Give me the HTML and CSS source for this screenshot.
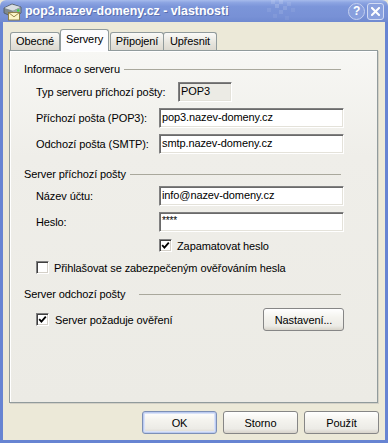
FILE: index.html
```html
<!DOCTYPE html>
<html lang="cs">
<head>
  <meta charset="UTF-8">
  <title>pop3.nazev-domeny.cz - vlastnosti</title>
  <link rel="stylesheet" href="styles.css">
</head>
<body>
  <div class="window">
    <!-- Titulek okna -->
    <div class="titlebar">
      <svg class="app-icon" width="19" height="19" viewBox="0 0 19 19">
        <polygon points="1,6 9,2 18,5 18,11 10,15 1,11" fill="#7f898e" stroke="#4d565b" stroke-width="0.8"/>
        <polygon points="1.5,6 9,2.5 17.5,5 10,8.8" fill="#d9dee1"/>
        <polygon points="10,9 17.5,5.3 17.5,10.8 10,14.5" fill="#9aa4a9"/>
        <circle cx="15.2" cy="8.4" r="1.2" fill="#35e03d"/>
        <rect x="5.5" y="10.5" width="11" height="7.5" fill="#fcf5c8" stroke="#8c7a3e" stroke-width="0.9"/>
        <polyline points="5.5,10.5 11,14.8 16.5,10.5" fill="none" stroke="#8c7a3e" stroke-width="0.9"/>
      </svg>
      <span class="title">pop3.nazev-domeny.cz - vlastnosti</span>
      <svg class="title-deco" width="34" height="22" viewBox="0 0 34 22">
        <rect x="4" y="0" width="4" height="4" fill="#fff" opacity="0.12"/>
        <rect x="12" y="0" width="4" height="4" fill="#fff" opacity="0.14"/>
        <rect x="20" y="2" width="4" height="4" fill="#fff" opacity="0.1"/>
        <rect x="8" y="4" width="4" height="4" fill="#fff" opacity="0.16"/>
        <rect x="16" y="6" width="4" height="4" fill="#fff" opacity="0.12"/>
        <rect x="0" y="8" width="4" height="4" fill="#fff" opacity="0.08"/>
        <rect x="12" y="10" width="4" height="4" fill="#fff" opacity="0.1"/>
        <rect x="24" y="8" width="4" height="4" fill="#fff" opacity="0.07"/>
        <rect x="6" y="14" width="4" height="4" fill="#fff" opacity="0.07"/>
        <rect x="18" y="16" width="4" height="4" fill="#fff" opacity="0.06"/>
      </svg>
      <div class="caption-buttons">
        <span class="cap-help">?</span>
        <span class="cap-close">
          <svg width="9" height="9" viewBox="0 0 9 9">
            <path d="M1 1 L8 8 M8 1 L1 8" stroke="#fff" stroke-width="2" stroke-linecap="square"/>
          </svg>
        </span>
      </div>
    </div>

    <div class="dialog-body">
      <!-- Záložky -->
      <div class="tabs">
        <span class="tab tab-general">Obecné</span>
        <span class="tab tab-servers active">Servery</span>
        <span class="tab tab-connection">Připojení</span>
        <span class="tab tab-advanced">Upřesnit</span>
      </div>

      <div class="tab-panel">
        <div class="group-title"><span class="gt-text gt-info">Informace o serveru</span></div>
        <div class="row">
          <span class="label">Typ serveru příchozí pošty:</span>
          <span class="field readonly">POP3</span>
        </div>
        <div class="row">
          <span class="label">Příchozí pošta (POP3):</span>
          <span class="field wide">pop3.nazev-domeny.cz</span>
        </div>
        <div class="row">
          <span class="label">Odchozí pošta (SMTP):</span>
          <span class="field wide">smtp.nazev-domeny.cz</span>
        </div>

        <div class="group-title gap"><span class="gt-text gt-in">Server příchozí pošty</span></div>
        <div class="row first">
          <span class="label">Název účtu:</span>
          <span class="field wide">info@nazev-domeny.cz</span>
        </div>
        <div class="row">
          <span class="label">Heslo:</span>
          <span class="field wide password">****</span>
        </div>
        <div class="row check-row indent">
          <span class="checkbox checked"><svg width="9" height="9" viewBox="0 0 9 9"><polyline points="1.2,4.2 3.4,6.6 7.8,1.6" fill="none" stroke="#000" stroke-width="1.8"/></svg></span>
          <span class="check-label">Zapamatovat heslo</span>
        </div>
        <div class="row check-row spa">
          <span class="checkbox"></span>
          <span class="check-label">Přihlašovat se zabezpečeným ověřováním hesla</span>
        </div>

        <div class="group-title gap"><span class="gt-text gt-out">Server odchozí pošty</span></div>
        <div class="row button-row">
          <span class="checkbox checked"><svg width="9" height="9" viewBox="0 0 9 9"><polyline points="1.2,4.2 3.4,6.6 7.8,1.6" fill="none" stroke="#000" stroke-width="1.8"/></svg></span>
          <span class="check-label">Server požaduje ověření</span>
          <button class="btn btn-settings">Nastavení...</button>
        </div>
      </div>

      <div class="buttons">
        <button class="btn default">OK</button>
        <button class="btn">Storno</button>
        <button class="btn">Použít</button>
      </div>
    </div>
  </div>
</body>
</html>
```

FILE: styles.css
```css
* {
  margin: 0;
  padding: 0;
  box-sizing: border-box;
}

body {
  font-family: Tahoma, 'Liberation Sans', Arial, sans-serif;
  font-size: 11px;
  letter-spacing: -0.1px;
  color: #000;
  background-color: #ece9d8;
}

.window {
  width: 388px;
  height: 443px;
  display: flex;
  flex-direction: column;
  background-color: #ece9d8;
}

/* Titulek */
.titlebar {
  height: 22px;
  display: flex;
  align-items: center;
  padding: 0 4px 0 3px;
  background: linear-gradient(#a6bbeb 0%, #8ca4e2 12%, #7b95d9 30%, #7891d6 75%, #6f89d0 100%);
  border-radius: 6px 6px 0 0;
}

.app-icon {
  flex-shrink: 0;
  margin-top: 1px;
}

.title {
  margin-left: 3px;
  font-family: 'Liberation Sans', Arial, sans-serif;
  font-weight: bold;
  font-size: 12.4px;
  letter-spacing: 0;
  color: #fff;
  text-shadow: 1px 1px 0 #5a70b0;
  white-space: nowrap;
}

.title-deco {
  margin-left: 38px;
  align-self: flex-start;
}

.caption-buttons {
  margin-left: auto;
  display: flex;
  gap: 2px;
  align-items: center;
}

.cap-help {
  width: 17px;
  height: 17px;
  border: 1px solid #c4d0f0;
  border-radius: 50%;
  background-color: #889fdd;
  color: #fff;
  font-family: 'Liberation Sans', Arial, sans-serif;
  font-weight: bold;
  font-size: 12px;
  line-height: 15px;
  text-align: center;
}

.cap-close {
  width: 17px;
  height: 17px;
  border: 1px solid #d2dbf3;
  border-radius: 3px;
  background-color: #8aa1de;
  display: flex;
  align-items: center;
  justify-content: center;
}

/* Tělo dialogu */
.dialog-body {
  flex: 1;
  border: 3px solid #6784d2;
  border-top: 0;
  padding: 7px 7px 0 6px;
}

.tabs {
  display: flex;
  align-items: flex-end;
  height: 21px;
  padding-left: 1px;
  position: relative;
  z-index: 1;
}

.tab {
  height: 18px;
  line-height: 17px;
  text-align: center;
  border: 1px solid #919b9c;
  border-bottom: 0;
  border-radius: 3px 3px 0 0;
  background: linear-gradient(#fafaf8, #e6e4dc 60%, #dcd9d0);
  white-space: nowrap;
}

.tab-general { width: 50px; }
.tab-servers { width: 49px; }
.tab-connection { width: 54px; margin-left: 1px; }
.tab-advanced { width: 54px; margin-left: -1px; }

.tab.active {
  height: 22px;
  line-height: 19px;
  margin-bottom: -1px;
  background: #fcfcfe;
  position: relative;
}

.tab-panel {
  height: 353px;
  border: 1px solid #919b9c;
  background: linear-gradient(#f7f7f4, #efeee9 30%, #ecebe5);
  box-shadow: inset 1px 1px 0 #fff, 1px 1px 0 #d3d0c6;
  padding: 12px 33px 0 14px;
}

/* Skupiny */
.group-title {
  display: flex;
  align-items: center;
  height: 13px;
  line-height: 13px;
}

.group-title::after {
  content: '';
  flex: 1;
  margin: -1px 3px 0 0;
  border-top: 1px solid #a9a89c;
}

.group-title.gap {
  margin-top: 14px;
}

.gt-text {
  white-space: nowrap;
}

.gt-info { width: 100px; }
.gt-in { width: 106px; }
.gt-out { width: 115px; }

.row {
  display: flex;
  align-items: center;
  height: 20px;
  margin-top: 6px;
  padding-left: 12px;
}

.row.first {
  margin-top: 5px;
}

.label {
  width: 123px;
  white-space: nowrap;
}

.field {
  height: 20px;
  line-height: 16px;
  padding: 0 2px;
  background-color: #fff;
  border-top: 1px solid #808080;
  border-left: 1px solid #808080;
  border-bottom: 1px solid #fff;
  border-right: 1px solid #fff;
  box-shadow: inset 1px 1px 0 #6a6a6a, inset -1px -1px 0 #e4e2da;
  white-space: nowrap;
}

.field.wide {
  flex: 1;
}

.field.readonly {
  width: 54px;
  margin-left: 19px;
  background-color: #ecebe5;
}

.field.password {
  line-height: 15px;
  font-size: 10px;
}

/* Zaškrtávací políčka */
.check-row {
  height: 13px;
  margin-top: 7px;
}

.check-row.indent {
  padding-left: 135px;
}

.check-row.spa {
  margin-top: 9px;
}

.checkbox {
  width: 13px;
  height: 13px;
  flex-shrink: 0;
  background-color: #fff;
  border-top: 1px solid #808080;
  border-left: 1px solid #808080;
  border-bottom: 1px solid #fff;
  border-right: 1px solid #fff;
  box-shadow: inset 1px 1px 0 #404040, inset -1px -1px 0 #d4d0c8;
  display: flex;
  align-items: center;
  justify-content: center;
}

.check-label {
  margin-left: 5px;
  white-space: nowrap;
}

.button-row {
  height: 23px;
  margin-top: 7px;
}

.button-row .check-label {
  margin-left: 6px;
}

/* Tlačítka */
.btn {
  height: 23px;
  width: 75px;
  font-family: Tahoma, 'Liberation Sans', Arial, sans-serif;
  font-size: 11px;
  letter-spacing: -0.1px;
  color: #000;
  border: 1px solid #868686;
  border-radius: 3px;
  background: linear-gradient(#ffffff, #f4f3ee 40%, #ecebe6 80%, #d8d4cb);
}

.btn.default {
  border-color: #7c8fb6;
  box-shadow: inset 0 0 0 1px #bccbf0, inset 0 0 0 2px #d9e2f8;
}

.btn-settings {
  width: 81px;
  margin-left: auto;
}

.buttons {
  display: flex;
  justify-content: flex-end;
  gap: 6px;
  margin: 8px -1px 0 0;
}
```
